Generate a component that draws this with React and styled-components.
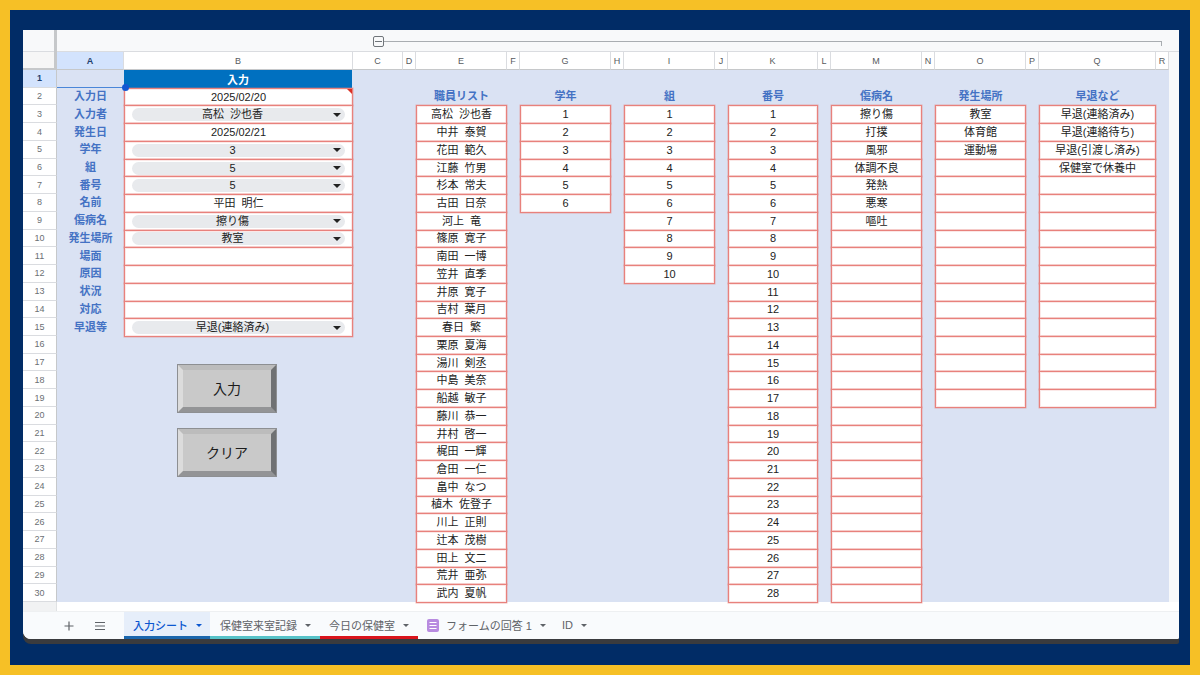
import React from 'react'
import styled, { createGlobalStyle } from 'styled-components'

const FONT = '"Liberation Sans", "Noto Sans CJK JP", sans-serif'
const COLUMNS = '67px 229px 50px 13px 91px 13px 91px 13px 91px 13px 90px 13px 91px 13px 91px 13px 117px 13px 10px'

const Global = createGlobalStyle`
  html, body { margin: 0; padding: 0; background: #f6c026; }
  body { font-family: ${FONT}; }
`

const Frame = styled.div`
  box-sizing: border-box;
  width: 1200px;
  height: 675px;
  border: 10px solid #f6c026;
  background: #012c66;
  padding: 20px 11px 0 13px;
`

const Sheet = styled.div`
  width: 1156px;
  height: 609px;
  display: flex;
  flex-direction: column;
  background: #fff;
  border-radius: 0 0 2px 8px;
  box-shadow: 0 5px 0 #3a3b3e;
`

const TopRow = styled.div`
  display: flex;
  height: 40px;
  flex: none;
`

const Corner = styled.div`
  box-sizing: border-box;
  width: 34px;
  background: linear-gradient(#f8f9fa 21px, #dadce0 21px, #dadce0 22px, #f6f6f6 22px);
  border-right: 3px solid #c6c8ca;
  border-bottom: 2px solid #c6c8ca;
`

const TopRight = styled.div`
  flex: 1;
  display: flex;
  flex-direction: column;
`

const GroupBar = styled.div`
  box-sizing: border-box;
  height: 22px;
  background: #f8f9fa;
  border-bottom: 1px solid #dadce0;
  padding: 6px 17px 0 316px;
  display: flex;
  align-items: flex-start;
`

const GroupToggle = styled.div`
  box-sizing: border-box;
  width: 11px;
  height: 11px;
  border: 1px solid #70757a;
  border-radius: 2px;
  flex: none;
  display: flex;
  align-items: center;
  justify-content: center;
  &::before {
    content: '';
    width: 7px;
    height: 1px;
    background: #70757a;
  }
`

const GroupLine = styled.div`
  flex: 1;
  height: 4px;
  margin-top: 5px;
  border-top: 1px solid #a9adb1;
  border-right: 1px solid #a9adb1;
`

const ColHeadRow = styled.div`
  display: grid;
  grid-template-columns: ${COLUMNS};
  height: 18px;
`

const ColHead = styled.div`
  box-sizing: border-box;
  display: flex;
  align-items: center;
  justify-content: center;
  font-size: 9px;
  font-weight: ${p => (p.$active ? 700 : 400)};
  color: ${p => (p.$active ? '#1f3f6e' : '#575b60')};
  background: ${p => (p.$active ? '#d3e3fd' : '#fff')};
  border-right: 1px solid #dadce0;
  border-bottom: 1px solid #c6c8ca;
`

const GutterHead = styled.div`
  background: #f8f9fa;
`

const Body = styled.div`
  flex: none;
  height: 532px;
  display: flex;
`

const RowHeads = styled.div`
  width: 34px;
  display: grid;
  grid-template-rows: repeat(30, minmax(0, 1fr));
`

const RowHead = styled.div`
  box-sizing: border-box;
  display: flex;
  align-items: center;
  justify-content: center;
  font-size: 9px;
  font-weight: ${p => (p.$active ? 700 : 400)};
  color: ${p => (p.$active ? '#1f3f6e' : '#6b6f74')};
  background: ${p => (p.$active ? '#d3e3fd' : '#fff')};
  border-right: 1px solid #c6c8ca;
  border-bottom: 1px solid #dadce0;
`

const Cells = styled.div`
  flex: 1;
  display: grid;
  grid-template-columns: ${COLUMNS};
  background: #dae2f3;
`

const Col = styled.div`
  display: grid;
  grid-template-rows: repeat(30, minmax(0, 1fr));
  min-width: 0;
`

const Gutter = styled.div`
  background: #f8f9fa;
`

const SelectedLabel = styled.div`
  position: relative;
  border-bottom: 1px solid #4a86d8;
`

const SelectionDot = styled.span`
  position: absolute;
  right: -5px;
  bottom: -4px;
  width: 7px;
  height: 7px;
  border-radius: 50%;
  background: #1557d2;
  z-index: 3;
`

const Label = styled.div`
  display: flex;
  align-items: center;
  justify-content: center;
  font-size: 11px;
  font-weight: 700;
  color: #4472c4;
  line-height: 1;
`

const Heading = styled(Label)`
  grid-row: 1 / span 2;
  align-items: flex-end;
  padding-bottom: 3px;
`

const Banner = styled.div`
  display: flex;
  align-items: center;
  justify-content: center;
  margin-right: 1px;
  background: #0070c0;
  color: #fff;
  font-size: 11px;
  font-weight: 700;
`

const Cell = styled.div`
  position: relative;
  box-sizing: border-box;
  display: flex;
  align-items: center;
  justify-content: center;
  margin-bottom: -1px;
  border: 1px solid #e8817c;
  box-shadow: 0 0 0 0.5px rgba(232, 129, 124, 0.55), inset 0 0 0 1px rgba(232, 129, 124, 0.18);
  background: #fff;
  color: #222;
  font-size: 11px;
  line-height: 1;
  word-spacing: 3px;
  white-space: nowrap;
`

const NoteMark = styled.span`
  position: absolute;
  top: 0;
  right: 0;
  width: 0;
  height: 0;
  border-top: 5px solid #d93025;
  border-left: 5px solid transparent;
`

const Pill = styled.div`
  box-sizing: border-box;
  width: 213px;
  height: 13px;
  display: flex;
  align-items: center;
  border-radius: 7px;
  background: #e8eaed;
`

const PillText = styled.span`
  flex: 1;
  text-align: center;
`

const Caret = styled.span`
  width: 0;
  height: 0;
  margin-right: 4px;
  border-top: 4px solid #222;
  border-left: 4px solid transparent;
  border-right: 4px solid transparent;
`

const ButtonArea = styled.div`
  grid-row: 17 / 25;
  display: flex;
  flex-direction: column;
  gap: 15px;
  padding: 10px 0 0 53px;
`

const BevelButton = styled.button`
  box-sizing: border-box;
  width: 100px;
  height: 49px;
  padding: 0;
  background: #c9c9c9;
  border-style: solid;
  border-width: 6px;
  border-color: #bcbcbc #6f7173 #939496 #dcdcdc;
  outline: 1px solid #8d8f92;
  outline-offset: -1px;
  color: #1c1c1c;
  font-family: ${FONT};
  font-size: 14px;
`

const Strip = styled.div`
  flex: none;
  display: flex;
  height: 10px;
  border-bottom: 1px solid #eef0f2;
  box-sizing: border-box;
`

const StripCorner = styled.div`
  width: 34px;
  background: #f1f2f3;
  border-right: 1px solid #e0e2e4;
  box-sizing: border-box;
`

const TabBar = styled.div`
  flex: 1;
  display: flex;
  align-items: stretch;
  background: #f9fbfd;
  border-radius: 0 0 2px 8px;
  color: #5f6368;
`

const BarIcons = styled.div`
  width: 101px;
  display: flex;
  align-items: center;
  padding: 1px 0 0 41px;
  gap: 20px;
  box-sizing: border-box;
`

const Tab = styled.div`
  box-sizing: border-box;
  width: ${p => p.$w}px;
  display: flex;
  align-items: center;
  gap: 8px;
  padding: 2px 0 0 ${p => p.$pad}px;
  font-size: 11px;
  font-weight: ${p => (p.$active ? 500 : 400)};
  color: ${p => (p.$active ? '#0b57d0' : '#5f6368')};
  background: ${p => (p.$active ? '#e6eefa' : 'transparent')};
  border-bottom: 3px solid ${p => p.$accent || 'transparent'};
  white-space: nowrap;
`

const TabCaret = styled.span`
  width: 0;
  height: 0;
  border-top: 3px solid currentColor;
  border-left: 3px solid transparent;
  border-right: 3px solid transparent;
`

const TabName = styled.span`
  display: flex;
  align-items: center;
  gap: 7px;
`

const columnLetters = 'ABCDEFGHIJKLMNOPQR'.split('')

const form = [
  { label: '入力日', value: '2025/02/20', mark: true },
  { label: '入力者', value: '高松 沙也香', drop: true },
  { label: '発生日', value: '2025/02/21' },
  { label: '学年', value: '3', drop: true },
  { label: '組', value: '5', drop: true },
  { label: '番号', value: '5', drop: true },
  { label: '名前', value: '平田 明仁' },
  { label: '傷病名', value: '擦り傷', drop: true },
  { label: '発生場所', value: '教室', drop: true },
  { label: '場面', value: '' },
  { label: '原因', value: '' },
  { label: '状況', value: '' },
  { label: '対応', value: '' },
  { label: '早退等', value: '早退(連絡済み)', drop: true },
]

const range = n => Array.from({ length: n }, (_, i) => String(i + 1))

const staff = [
  '高松 沙也香', '中井 泰賀', '花田 範久', '江藤 竹男', '杉本 常夫', '古田 日奈', '河上 竜',
  '篠原 寛子', '南田 一博', '笠井 直季', '井原 寛子', '吉村 葉月', '春日 繁', '栗原 夏海',
  '湯川 剣丞', '中島 美奈', '船越 敏子', '藤川 恭一', '井村 啓一', '梶田 一輝', '倉田 一仁',
  '畠中 なつ', '植木 佐登子', '川上 正則', '辻本 茂樹', '田上 文二', '荒井 亜弥', '武内 夏帆',
]

const lists = [
  { head: '職員リスト', rows: 28, items: staff },
  { head: '学年', rows: 6, items: range(6) },
  { head: '組', rows: 10, items: range(10) },
  { head: '番号', rows: 28, items: range(28) },
  { head: '傷病名', rows: 28, items: ['擦り傷', '打撲', '風邪', '体調不良', '発熱', '悪寒', '嘔吐'] },
  { head: '発生場所', rows: 17, items: ['教室', '体育館', '運動場'] },
  { head: '早退など', rows: 17, items: ['早退(連絡済み)', '早退(連絡待ち)', '早退(引渡し済み)', '保健室で休養中'] },
]

function FormIcon() {
  return (
    <svg width="12" height="13" viewBox="0 0 12 13">
      <rect width="12" height="13" rx="2" fill="#b88be0" />
      <path d="M2.5 3.5h7M2.5 6.5h7M2.5 9.5h7" stroke="#fff" strokeWidth="1.2" />
    </svg>
  )
}

function PlusIcon() {
  return (
    <svg width="10" height="10" viewBox="0 0 10 10">
      <path d="M5 .5v9M.5 5h9" stroke="#5f6368" strokeWidth="1.2" />
    </svg>
  )
}

function MenuIcon() {
  return (
    <svg width="12" height="10" viewBox="0 0 12 10">
      <path d="M1 1.5h10M1 5h10M1 8.5h10" stroke="#5f6368" strokeWidth="1.2" />
    </svg>
  )
}

export default function App() {
  return (
    <>
      <Global />
      <Frame>
        <Sheet>
          <TopRow>
            <Corner />
            <TopRight>
              <GroupBar>
                <GroupToggle />
                <GroupLine />
              </GroupBar>
              <ColHeadRow>
                {columnLetters.map(l => (
                  <ColHead key={l} $active={l === 'A'}>{l}</ColHead>
                ))}
                <GutterHead />
              </ColHeadRow>
            </TopRight>
          </TopRow>

          <Body>
            <RowHeads>
              {range(30).map(n => (
                <RowHead key={n} $active={n === '1'}>{n}</RowHead>
              ))}
            </RowHeads>
            <Cells>
              <Col>
                <SelectedLabel><SelectionDot /></SelectedLabel>
                {form.map(f => <Label key={f.label}>{f.label}</Label>)}
              </Col>
              <Col>
                <Banner>入力</Banner>
                {form.map(f => (
                  <Cell key={f.label}>
                    {f.mark && <NoteMark />}
                    {f.drop ? (
                      <Pill>
                        <PillText>{f.value}</PillText>
                        <Caret />
                      </Pill>
                    ) : f.value}
                  </Cell>
                ))}
                <ButtonArea>
                  <BevelButton>入力</BevelButton>
                  <BevelButton>クリア</BevelButton>
                </ButtonArea>
              </Col>
              <Col />
              {lists.map(list => (
                <React.Fragment key={list.head}>
                  <Col />
                  <Col>
                    <Heading>{list.head}</Heading>
                    {Array.from({ length: list.rows }, (_, i) => (
                      <Cell key={i}>{list.items[i] || ''}</Cell>
                    ))}
                  </Col>
                </React.Fragment>
              ))}
              <Col />
              <Gutter />
            </Cells>
          </Body>

          <Strip><StripCorner /></Strip>

          <TabBar>
            <BarIcons>
              <PlusIcon />
              <MenuIcon />
            </BarIcons>
            <Tab $w={86} $pad={9} $active $accent="#1a66ad">入力シート<TabCaret /></Tab>
            <Tab $w={110} $pad={10} $accent="#56c2c8">保健室来室記録<TabCaret /></Tab>
            <Tab $w={98} $pad={9} $accent="#d9141c">今日の保健室<TabCaret /></Tab>
            <Tab $w={135} $pad={9}><TabName><FormIcon />フォームの回答 1</TabName><TabCaret /></Tab>
            <Tab $w={50} $pad={9}>ID<TabCaret /></Tab>
          </TabBar>
        </Sheet>
      </Frame>
    </>
  )
}
